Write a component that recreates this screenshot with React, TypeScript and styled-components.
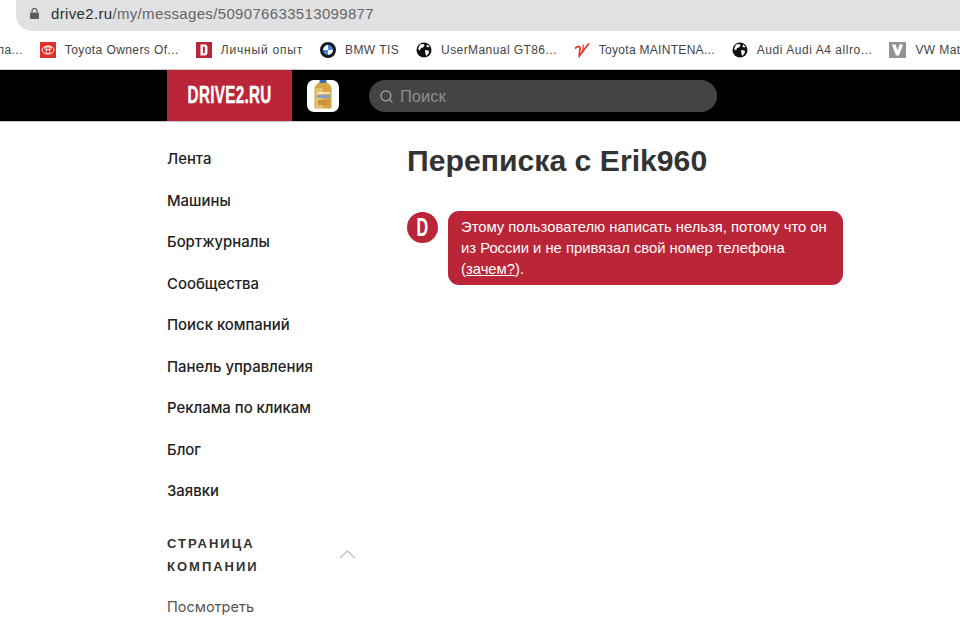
import styled, { createGlobalStyle } from 'styled-components'
import { Search } from 'lucide-react'

const menu = [
  'Лента',
  'Машины',
  'Бортжурналы',
  'Сообщества',
  'Поиск компаний',
  'Панель управления',
  'Реклама по кликам',
  'Блог',
  'Заявки',
]

function Globe() {
  return (
    <svg width='16' height='16' viewBox='0 0 16 16'>
      <circle cx='8' cy='8' r='7.5' fill='#111' />
      <path d='M4 2.500 7.500 2l1 1.500-1.500 2-2 .5-1 2.500-2-1.500zM9 8l3.500.5.5 2-2.500 3.500-1-2zM11 2.500l2.500 2-1.500 1-1.500-1z' fill='#fff' />
    </svg>
  )
}

function ToyotaIcon() {
  return (
    <svg width='16' height='16' viewBox='0 0 16 16'>
      <rect width='16' height='16' fill='#e2302c' />
      <ellipse cx='8' cy='8' rx='6' ry='4' fill='none' stroke='#fff' strokeWidth='1' />
      <ellipse cx='8' cy='8' rx='1.800' ry='4' fill='none' stroke='#fff' strokeWidth='.8' />
      <ellipse cx='8' cy='6.200' rx='3.600' ry='1.500' fill='none' stroke='#fff' strokeWidth='.8' />
    </svg>
  )
}

function DriveIcon() {
  return (
    <svg width='16' height='16' viewBox='0 0 16 16'>
      <rect width='16' height='16' fill='#bb2538' />
      <path fillRule='evenodd' d='M4.500 2.500h4c2.200 0 3 1 3 3v5c0 2-.8 3-3 3h-4zM7 4.600v6.800h.8c.8 0 1-.4 1-1.100V5.700c0-.7-.2-1.100-1-1.100z' fill='#fff' />
    </svg>
  )
}

function BmwIcon() {
  return (
    <svg width='16' height='16' viewBox='0 0 16 16'>
      <circle cx='8' cy='8' r='8' fill='#15181f' />
      <path d='M8 3a5 5 0 0 1 5 5H8zM8 13a5 5 0 0 1-5-5h5z' fill='#3f8fdc' />
      <path d='M8 3a5 5 0 0 0-5 5h5zM8 13a5 5 0 0 0 5-5H8z' fill='#fff' />
    </svg>
  )
}

function ScribbleIcon() {
  return (
    <svg width='16' height='16' viewBox='0 0 16 16'>
      <path d='M1 6.500C3 4.500 5.500 4 6 5.500c.4 2-1 5-.6 8.500C7.500 11 11 6 15 1.500' fill='none' stroke='#e8352c' strokeWidth='1.800' />
      <path d='M9 2.500C10 5 8.500 8 8.500 11' fill='none' stroke='#e8352c' strokeWidth='1.300' />
    </svg>
  )
}

function VwIcon() {
  return (
    <svg width='17' height='16' viewBox='0 0 17 16'>
      <rect width='17' height='16' fill='#8e9496' />
      <path d='M3 2.500h3.600l1.900 6 1.900-6H14L10 13.500H7z' fill='#fff' />
    </svg>
  )
}

function OilBottle() {
  return (
    <svg width='32' height='32' viewBox='0 0 32 32'>
      <rect x='12.500' y='0' width='7' height='3' fill='#3c6fb0' />
      <path d='M11 3h10l3.500 4v20c0 1-.5 1.500-1.500 1.500H9c-1 0-1.500-.5-1.500-1.500V7z' fill='#d6a544' />
      <path d='M8.500 8h7v20h-7z' fill='#e6c074' />
      <rect x='10' y='12' width='13' height='2' fill='#f0e3b6' />
      <rect x='10' y='15' width='13' height='3' fill='#7ba6c9' />
      <rect x='11' y='20' width='11' height='5' fill='#c9973a' />
    </svg>
  )
}

export default function App() {
  return (
    <Page>
      <GlobalStyle />
      <AddressArea>
        <AddressBar>
          <Lock>
            <svg width='9' height='11' viewBox='0 0 9 11'>
              <path d='M2 4.500V3a2.500 2.500 0 0 1 5 0v1.500' fill='none' stroke='#5c5c5e' strokeWidth='1.200' />
              <rect y='4.500' width='9' height='6.500' rx='1' fill='#5c5c5e' />
            </svg>
          </Lock>
          <Url>
            <b>drive2.ru</b>/my/messages/509076633513099877
          </Url>
        </AddressBar>
      </AddressArea>
      <Bookmarks>
        <Bookmark>ла...</Bookmark>
        <Bookmark><ToyotaIcon />Toyota Owners Of...</Bookmark>
        <Bookmark $tracking={0.8}><DriveIcon />Личный опыт</Bookmark>
        <Bookmark><BmwIcon />BMW TIS</Bookmark>
        <Bookmark><Globe />UserManual GT86...</Bookmark>
        <Bookmark $tracking={0.3}><ScribbleIcon />Toyota MAINTENA...</Bookmark>
        <Bookmark $tracking={0.55}><Globe />Audi Audi A4 allro...</Bookmark>
        <Bookmark><VwIcon />VW Mat</Bookmark>
      </Bookmarks>
      <Header>
        <Logo><LogoText>DRIVE2.RU</LogoText></Logo>
        <ProductThumb><OilBottle /></ProductThumb>
        <SearchBox>
          <Search size={15} color='#a8a8a8' strokeWidth={2} />
          <span>Поиск</span>
        </SearchBox>
      </Header>
      <Content>
        <Sidebar>
          <MenuList>
            {menu.map((item) => (
              <MenuItem key={item}>{item}</MenuItem>
            ))}
          </MenuList>
          <SectionHead>
            <SectionTitle>Страница компании</SectionTitle>
            <Chevron width='17' height='10' viewBox='0 0 17 10'>
              <path d='M1 9 8.500 2 16 9' fill='none' stroke='#c4c4c4' strokeWidth='1.500' />
            </Chevron>
          </SectionHead>
          <SubItem>Посмотреть</SubItem>
        </Sidebar>
        <Main>
          <Title>Переписка с Erik960</Title>
          <Message>
            <Avatar>
              <AvatarLetter>D</AvatarLetter>
            </Avatar>
            <Bubble>
              Этому пользователю написать нельзя, потому что он из России и не
              привязал свой номер телефона (<a href='#why'>зачем?</a>).
            </Bubble>
          </Message>
        </Main>
      </Content>
    </Page>
  )
}

const GlobalStyle = createGlobalStyle`
  html, body {
    margin: 0;
    background: #fff;
    overflow: hidden;
  }
  * {
    box-sizing: border-box;
  }
`

const Page = styled.div`
  width: 960px;
  height: 623px;
  overflow: hidden;
  font-family: 'Liberation Sans', Arial, sans-serif;
  color: #222;
`

const AddressArea = styled.div`
  height: 31px;
  padding-left: 16px;
`

const AddressBar = styled.div`
  height: 31px;
  background: #e0e1e3;
  border-radius: 0 0 0 16px;
  display: flex;
  align-items: center;
  padding-left: 14px;
  padding-bottom: 4px;
`

const Lock = styled.div`
  width: 21px;
  display: flex;
`

const Url = styled.div`
  font-size: 15px;
  letter-spacing: 0.34px;
  color: #666;

  b {
    font-weight: 400;
    color: #2f2f2f;
  }
`

const Bookmarks = styled.div`
  height: 39px;
  border-bottom: 1px solid #c9c9c9;
  display: flex;
  align-items: center;
  gap: 17px;
  white-space: nowrap;
  overflow: hidden;
`

const Bookmark = styled.div<{ $tracking?: number }>`
  display: flex;
  align-items: center;
  gap: 9px;
  flex: none;
  font-size: 12px;
  letter-spacing: ${(p) => p.$tracking ?? 0.42}px;
  color: #444;

  &:first-child {
    margin-left: -3px;
  }
`

const Header = styled.header`
  height: 52px;
  background: #000;
  border-bottom: 1px solid #c9c9c9;
  padding-left: 167px;
  display: flex;
  align-items: center;
`

const Logo = styled.div`
  width: 125px;
  height: 51px;
  background: #bb2538;
  display: flex;
  align-items: center;
  justify-content: center;
`

const LogoText = styled.span`
  font-family: 'Liberation Sans', sans-serif;
  font-weight: 700;
  font-size: 23px;
  letter-spacing: 0.5px;
  color: #fff;
  -webkit-text-stroke: 0.4px #fff;
  transform: scaleX(0.66);
  white-space: nowrap;
`

const ProductThumb = styled.div`
  width: 32px;
  height: 32px;
  margin-left: 15px;
  background: #fff;
  border-radius: 7px;
  overflow: hidden;
`

const SearchBox = styled.div`
  width: 348px;
  height: 32px;
  margin-left: 30px;
  background: #444;
  border-radius: 16px;
  display: flex;
  align-items: center;
  gap: 6px;
  padding: 1px 0 0 10px;
  font-size: 16.5px;
  color: #8d8d8d;
`

const Content = styled.div`
  display: flex;
  padding-left: 167px;
`

const Sidebar = styled.nav`
  width: 240px;
  flex: none;
  padding-top: 27px;
`

const MenuList = styled.div`
  display: flex;
  flex-direction: column;
  gap: 20.5px;
`

const MenuItem = styled.div`
  font-family: Inter, sans-serif;
  font-size: 14.9px;
  font-weight: 500;
  line-height: 21px;
  color: #222;
`

const SectionHead = styled.div`
  width: 190px;
  margin-top: 30px;
  display: flex;
  align-items: center;
  justify-content: space-between;
`

const SectionTitle = styled.div`
  width: 130px;
  font-size: 13px;
  font-weight: 700;
  line-height: 23px;
  letter-spacing: 2px;
  text-transform: uppercase;
  color: #333;
`

const Chevron = styled.svg`
  margin: 0 1px 2px 0;
`

const SubItem = styled.div`
  margin-top: 18px;
  font-family: Inter, sans-serif;
  font-size: 14.5px;
  line-height: 21px;
  color: #555;
`

const Main = styled.main`
  flex: none;
  width: 436px;
`

const Title = styled.h1`
  margin: 20px 0 0;
  font-size: 30.2px;
  font-weight: 700;
  line-height: 37px;
  color: #333;
`

const Message = styled.div`
  margin-top: 32px;
  display: flex;
  align-items: flex-start;
  gap: 10px;
`

const Avatar = styled.div`
  width: 31px;
  height: 31px;
  flex: none;
  margin-top: 1px;
  border-radius: 50%;
  background: #bb2538;
  display: flex;
  align-items: center;
  justify-content: center;
`

const AvatarLetter = styled.span`
  font-size: 26px;
  font-weight: 700;
  color: #fff;
  transform: scaleX(0.62);
`

const Bubble = styled.div`
  width: 395px;
  height: 74px;
  padding: 6px 13px;
  border-radius: 11px;
  background: #bb2538;
  font-size: 14.8px;
  line-height: 21px;
  color: #fff;

  a {
    color: #fff;
    text-decoration: underline;
  }
`
